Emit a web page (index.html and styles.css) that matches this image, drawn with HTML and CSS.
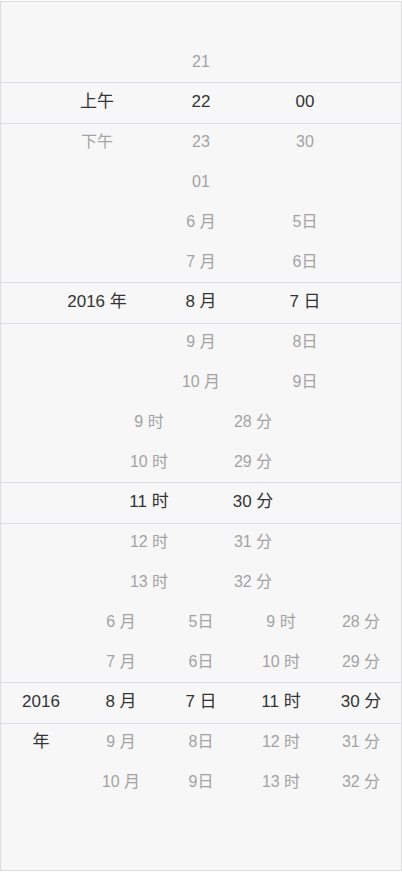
FILE: index.html
```html
<!DOCTYPE html>
<html lang="zh">
<head>
<meta charset="utf-8">
<title>Picker</title>
<link rel="stylesheet" href="styles.css">
</head>
<body>
<div class="frame">
  <div class="picker">
    <div class="col">
      <div class="item"></div>
      <div class="item"></div>
      <div class="item sel">上午</div>
      <div class="item">下午</div>
      <div class="item"></div>
    </div>
    <div class="col">
      <div class="item"></div>
      <div class="item">21</div>
      <div class="item sel">22</div>
      <div class="item">23</div>
      <div class="item">01</div>
    </div>
    <div class="col">
      <div class="item"></div>
      <div class="item"></div>
      <div class="item sel">00</div>
      <div class="item">30</div>
      <div class="item"></div>
    </div>
    <div class="indicator"></div>
  </div>

  <div class="picker">
    <div class="col">
      <div class="item"></div>
      <div class="item"></div>
      <div class="item sel">2016 年</div>
    </div>
    <div class="col">
      <div class="item">6 月</div>
      <div class="item">7 月</div>
      <div class="item sel">8 月</div>
      <div class="item">9 月</div>
      <div class="item">10 月</div>
    </div>
    <div class="col">
      <div class="item">5日</div>
      <div class="item">6日</div>
      <div class="item sel">7 日</div>
      <div class="item">8日</div>
      <div class="item">9日</div>
    </div>
    <div class="indicator"></div>
  </div>

  <div class="picker">
    <div class="col">
      <div class="item">9 时</div>
      <div class="item">10 时</div>
      <div class="item sel">11 时</div>
      <div class="item">12 时</div>
      <div class="item">13 时</div>
    </div>
    <div class="col">
      <div class="item">28 分</div>
      <div class="item">29 分</div>
      <div class="item sel">30 分</div>
      <div class="item">31 分</div>
      <div class="item">32 分</div>
    </div>
    <div class="indicator"></div>
  </div>

  <div class="picker">
    <div class="col">
      <div class="item"></div>
      <div class="item"></div>
      <div class="item sel">2016 年</div>
    </div>
    <div class="col">
      <div class="item">6 月</div>
      <div class="item">7 月</div>
      <div class="item sel">8 月</div>
      <div class="item">9 月</div>
      <div class="item">10 月</div>
    </div>
    <div class="col">
      <div class="item">5日</div>
      <div class="item">6日</div>
      <div class="item sel">7 日</div>
      <div class="item">8日</div>
      <div class="item">9日</div>
    </div>
    <div class="col">
      <div class="item">9 时</div>
      <div class="item">10 时</div>
      <div class="item sel">11 时</div>
      <div class="item">12 时</div>
      <div class="item">13 时</div>
    </div>
    <div class="col">
      <div class="item">28 分</div>
      <div class="item">29 分</div>
      <div class="item sel">30 分</div>
      <div class="item">31 分</div>
      <div class="item">32 分</div>
    </div>
    <div class="indicator"></div>
  </div>
</div>
</body>
</html>
```

FILE: styles.css
```css
html, body {
  margin: 0;
  padding: 0;
  background: #ffffff;
}

body {
  font-family: "Liberation Sans", "Noto Sans CJK SC", sans-serif;
}

.frame {
  box-sizing: border-box;
  width: 402px;
  height: 870px;
  margin-top: 1px;
  border: 1px solid #dedede;
  background: #f7f7f7;
  display: flex;
  flex-direction: column;
}

.picker {
  position: relative;
  height: 200px;
  display: flex;
  justify-content: center;
  flex: none;
}

.col {
  flex: 0 1 104px;
  min-width: 0;
  display: flex;
  flex-direction: column;
}

.item {
  box-sizing: border-box;
  height: 40px;
  line-height: 40px;
  padding: 0 12px;
  text-align: center;
  font-size: 16px;
  color: #a3a3a3;
  flex: none;
}

.item.sel {
  font-size: 17px;
  color: #333333;
}

.item.sel:only-child,
.item.sel:last-child {
  height: auto;
}

.indicator {
  position: absolute;
  left: -1px;
  right: -1px;
  top: 80px;
  height: 40px;
  border-top: 1px solid #d8dde7;
  border-bottom: 1px solid #d8dde7;
  pointer-events: none;
}
```
